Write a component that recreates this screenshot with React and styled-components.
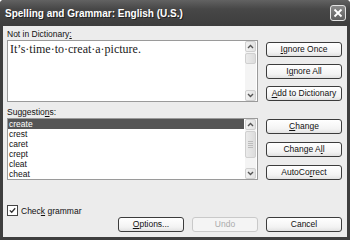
import React from "react";
import styled, { createGlobalStyle, css } from "styled-components";

const GlobalStyle = createGlobalStyle`
  html, body {
    margin: 0;
    padding: 0;
    background: #ffffff;
  }
  body {
    font-family: "Liberation Sans", Arial, sans-serif;
    color: #111;
  }
`;

const Window = styled.div`
  width: 350px;
  height: 240px;
  box-sizing: border-box;
  display: flex;
  flex-direction: column;
  background: #3e3e3e;
  border-radius: 4px 4px 0 0;
  overflow: hidden;
`;

const TitleBar = styled.div`
  height: 26px;
  flex: none;
  display: flex;
  align-items: center;
  justify-content: space-between;
  padding: 0 4px 0 5px;
  background: linear-gradient(#626262, #474747 35%, #3d3d3d);
`;

const Title = styled.span`
  color: #ffffff;
  font-size: 10px;
  font-weight: bold;
  text-shadow: 1px 1px 0 #222;
`;

const CloseButton = styled.div`
  width: 16px;
  height: 16px;
  box-sizing: border-box;
  border: 1px solid #e4e4e4;
  border-radius: 3px;
  background: linear-gradient(#8a8a8a, #5e5e5e);
  display: flex;
  align-items: center;
  justify-content: center;
`;

const Body = styled.div`
  flex: 1;
  display: flex;
  flex-direction: column;
  margin: 0 3px 3px 3px;
  padding: 3px 5px 5px 4px;
  background: #ececec;
`;

const Section = styled.div`
  display: flex;
  gap: 8px;
  margin-top: ${props => props.top || 0}px;
`;

const LeftColumn = styled.div`
  width: 251px;
  display: flex;
  flex-direction: column;
`;

const ButtonColumn = styled.div`
  width: 76px;
  display: flex;
  flex-direction: column;
  justify-content: flex-end;
  gap: ${props => props.gap}px;
  padding-bottom: ${props => props.bottom || 0}px;
`;

const Label = styled.div`
  height: 11px;
  font-size: 8.5px;
  line-height: 10px;
`;

const Key = styled.span`
  text-decoration: underline;
`;

const TextBox = styled.div`
  height: 62px;
  box-sizing: border-box;
  border: 1px solid #9a9a9a;
  background: #ffffff;
  display: flex;
`;

const SentenceArea = styled.div`
  flex: 1;
  padding: 1px 2px;
  font-family: "Liberation Serif", "Times New Roman", serif;
  font-size: 12px;
  line-height: 14px;
  color: #1a1a1a;
`;

const ScrollBar = styled.div`
  width: 11px;
  margin: 0 1px 0 0;
  display: flex;
  flex-direction: column;
  background: #f4f4f4;
`;

const ScrollArrow = styled.div`
  height: 11px;
  box-sizing: border-box;
  border: 1px solid #d0d0d0;
  border-radius: 2px;
  background: linear-gradient(90deg, #f2f2f2, #e2e2e2);
  display: flex;
  align-items: center;
  justify-content: center;
`;

const ScrollTrack = styled.div`
  flex: 1;
  padding-top: ${props => props.offset || 0}px;
`;

const Thumb = styled.div`
  height: ${props => props.size}px;
  box-sizing: border-box;
  border: 1px solid #d0d0d0;
  border-radius: 2px;
  background: linear-gradient(90deg, #ebebeb, #dcdcdc);
  display: flex;
  flex-direction: column;
  align-items: center;
  justify-content: center;
  gap: 1px;
`;

const Grip = styled.div`
  width: 5px;
  height: 1px;
  background: #bcbcbc;
`;

const ListBox = styled.div`
  height: 62px;
  box-sizing: border-box;
  border: 1px solid #9a9a9a;
  background: #ffffff;
  display: flex;
`;

const Items = styled.div`
  flex: 1;
  margin-right: 1px;
`;

const Item = styled.div`
  height: 10px;
  line-height: 10px;
  font-size: 8.5px;
  padding-left: 1px;
  color: #111;

  ${props =>
    props.selected &&
    css`
      background: #555555;
      color: #ffffff;
    `}
`;

const Button = styled.div`
  width: ${props => props.width || 76}px;
  height: 15px;
  box-sizing: border-box;
  border: 1px solid #3c3c3c;
  border-radius: 3px;
  background: linear-gradient(#ffffff, #f3f3f3 70%, #e2e2e2);
  font-size: 8.5px;
  line-height: 13px;
  text-align: center;
  color: #111;

  ${props =>
    props.disabled &&
    css`
      border-color: #c9c9c9;
      background: #f4f4f4;
      color: #ababab;
    `}
`;

const Footer = styled.div`
  margin-top: auto;
  display: flex;
  flex-direction: column;
`;

const CheckRow = styled.div`
  display: flex;
  align-items: center;
  gap: 3px;
  height: 11px;
  font-size: 8.5px;
`;

const CheckBox = styled.div`
  width: 11px;
  height: 11px;
  box-sizing: border-box;
  border: 1px solid #444;
  background: #ffffff;
  display: flex;
  align-items: center;
  justify-content: center;
`;

const ButtonRow = styled.div`
  display: flex;
  justify-content: flex-end;
  gap: 8px;
  margin-top: 1px;
`;

const Chevron = ({ down }) => (
  <svg width="7" height="5" viewBox="0 0 7 5">
    <path
      d={down ? "M1 1 L3.5 3.5 L6 1" : "M1 4 L3.5 1.5 L6 4"}
      fill="none"
      stroke="#555"
      strokeWidth="1.4"
    />
  </svg>
);

const suggestions = ["create", "crest", "caret", "crept", "cleat", "cheat"];

export default function App() {
  return (
    <>
      <GlobalStyle />
      <Window>
        <TitleBar>
          <Title>Spelling and Grammar: English (U.S.)</Title>
          <CloseButton>
            <svg width="10" height="10" viewBox="0 0 10 10">
              <path d="M1.5 1.5 L8.5 8.5 M8.5 1.5 L1.5 8.5" stroke="#fff" strokeWidth="1.8" />
            </svg>
          </CloseButton>
        </TitleBar>
        <Body>
          <Section>
            <LeftColumn>
              <Label>
                Not in Dictionary<Key>:</Key>
              </Label>
              <TextBox>
                <SentenceArea>It’s·time·to·creat·a·picture.</SentenceArea>
                <ScrollBar>
                  <ScrollArrow>
                    <Chevron />
                  </ScrollArrow>
                  <ScrollTrack offset={1}>
                    <Thumb size={11} />
                  </ScrollTrack>
                  <ScrollArrow>
                    <Chevron down />
                  </ScrollArrow>
                </ScrollBar>
              </TextBox>
            </LeftColumn>
            <ButtonColumn gap={7} bottom={1}>
              <Button>
                <Key>I</Key>gnore Once
              </Button>
              <Button>
                I<Key>g</Key>nore All
              </Button>
              <Button>
                <Key>A</Key>dd to Dictionary
              </Button>
            </ButtonColumn>
          </Section>

          <Section top={5}>
            <LeftColumn>
              <Label>
                Suggestio<Key>n</Key>s:
              </Label>
              <ListBox>
                <Items>
                  {suggestions.map((word, index) => (
                    <Item key={word} selected={index === 0}>
                      {word}
                    </Item>
                  ))}
                </Items>
                <ScrollBar>
                  <ScrollArrow>
                    <Chevron />
                  </ScrollArrow>
                  <ScrollTrack offset={1}>
                    <Thumb size={27}>
                      <Grip />
                      <Grip />
                      <Grip />
                      <Grip />
                    </Thumb>
                  </ScrollTrack>
                  <ScrollArrow>
                    <Chevron down />
                  </ScrollArrow>
                </ScrollBar>
              </ListBox>
            </LeftColumn>
            <ButtonColumn gap={8}>
              <Button>
                <Key>C</Key>hange
              </Button>
              <Button>
                Change A<Key>l</Key>l
              </Button>
              <Button>
                AutoCo<Key>r</Key>rect
              </Button>
            </ButtonColumn>
          </Section>

          <Footer>
            <CheckRow>
              <CheckBox>
                <svg width="7" height="7" viewBox="0 0 7 7">
                  <path d="M0.8 3.4 L2.7 5.3 L6.2 1.3" fill="none" stroke="#333" strokeWidth="1.3" />
                </svg>
              </CheckBox>
              <span>
                Chec<Key>k</Key> grammar
              </span>
            </CheckRow>
            <ButtonRow>
              <Button width={66}>
                <Key>O</Key>ptions...
              </Button>
              <Button width={66} disabled>
                Undo
              </Button>
              <Button>Cancel</Button>
            </ButtonRow>
          </Footer>
        </Body>
      </Window>
    </>
  );
}
